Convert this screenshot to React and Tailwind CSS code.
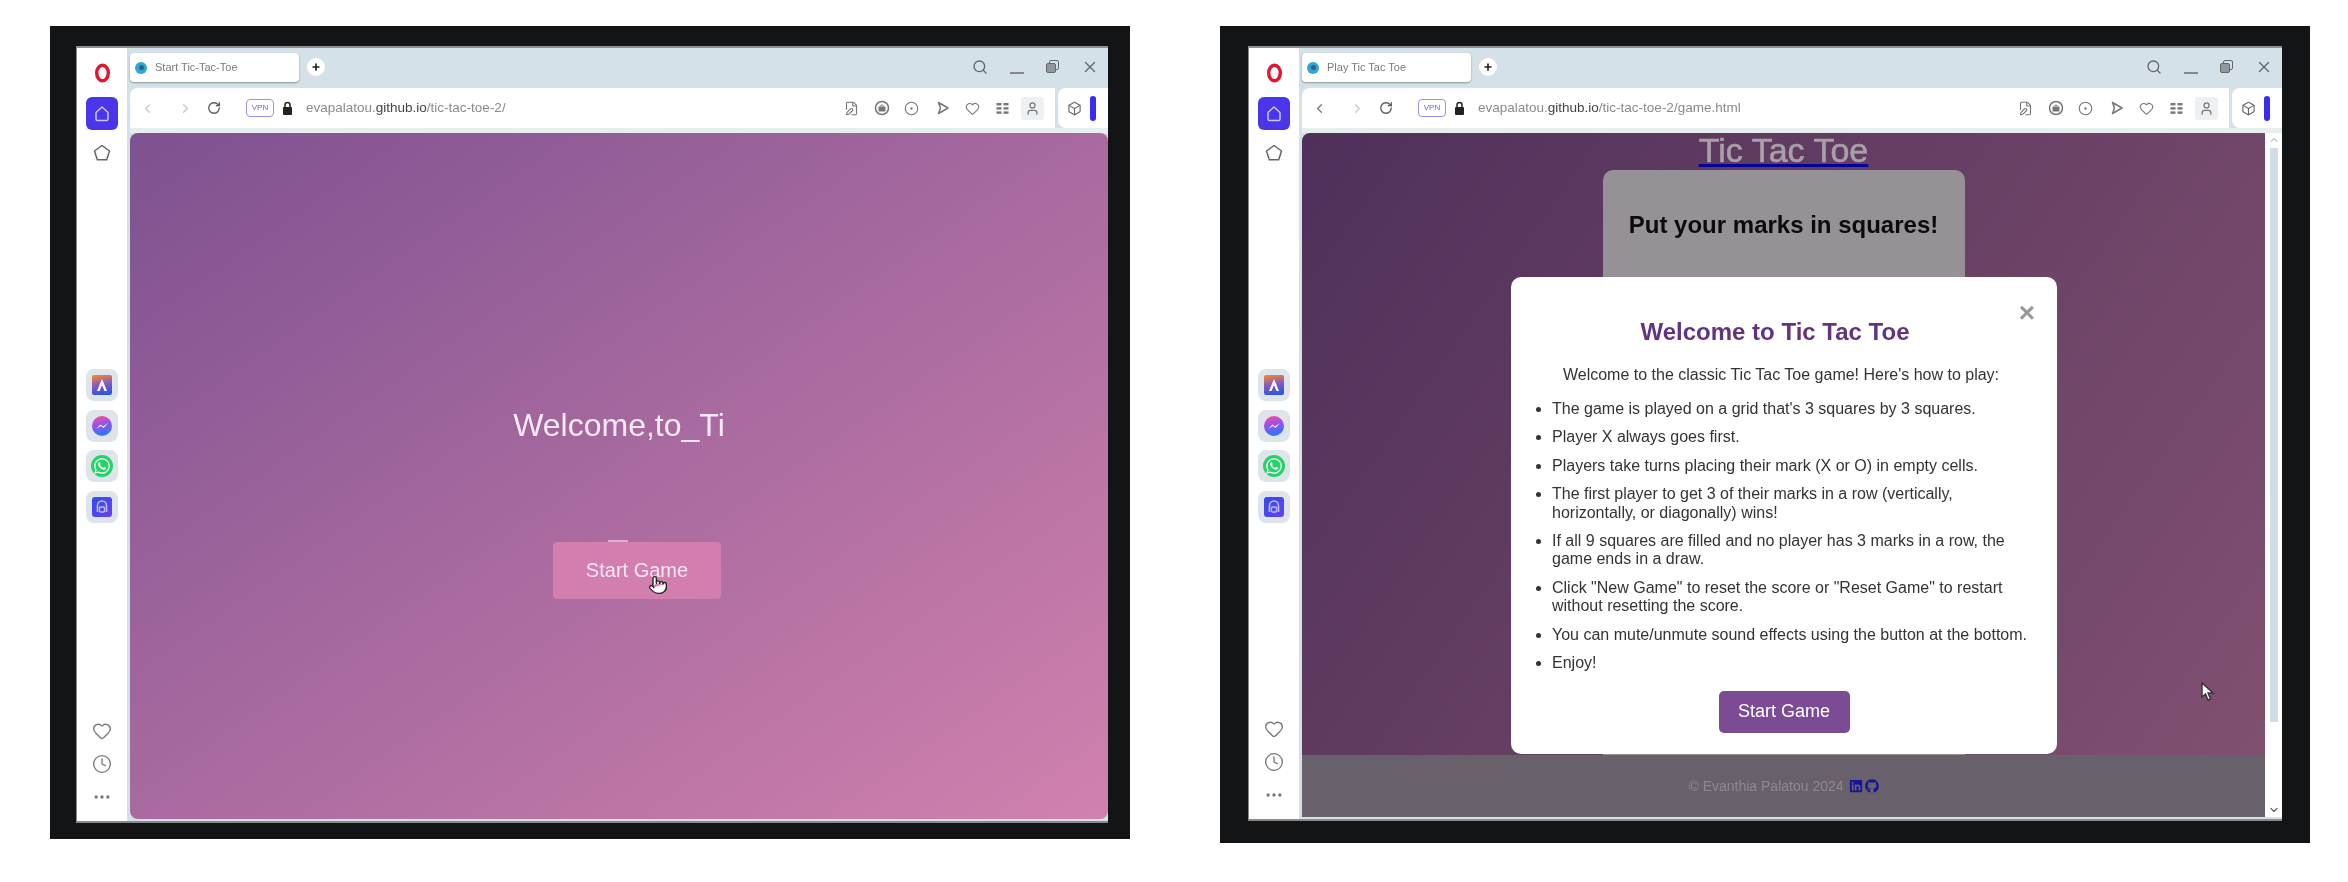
import React from 'react';
import {
  Search, X, ChevronLeft, ChevronRight, ChevronUp, ChevronDown, RotateCw, Heart, Clock,
  Ellipsis, Plus, Pointer, FilePen, CircleDot, User, Box,
} from 'lucide-react';
import { FaWhatsapp, FaLinkedin, FaGithub } from 'react-icons/fa';

const font = { fontFamily: '"Liberation Sans", Arial, sans-serif' };

const rules = [
  "The game is played on a grid that's 3 squares by 3 squares.",
  'Player X always goes first.',
  'Players take turns placing their mark (X or O) in empty cells.',
  'The first player to get 3 of their marks in a row (vertically, horizontally, or diagonally) wins!',
  'If all 9 squares are filled and no player has 3 marks in a row, the game ends in a draw.',
  'Click "New Game" to reset the score or "Reset Game" to restart without resetting the score.',
  'You can mute/unmute sound effects using the button at the bottom.',
  'Enjoy!',
];

const AppTile = ({ children }) => (
  <div className="w-8 h-8 rounded-lg bg-[#dde4ea] flex items-center justify-center">{children}</div>
);

const SnapIcon = () => (
  <svg width="16" height="16" viewBox="0 0 16 16" fill="none" stroke="currentColor" strokeWidth="1.5">
    <circle cx="8" cy="8" r="6.5" />
    <rect x="4.5" y="6.5" width="7" height="5" rx="1" fill="currentColor" stroke="none" />
    <path d="M6.5 6.5 L7.3 5 H8.7 L9.5 6.5" strokeWidth="1" />
  </svg>
);

const PlayerIcon = () => (
  <svg width="15" height="15" viewBox="0 0 15 15" fill="none" stroke="currentColor" strokeWidth="1.5" strokeLinejoin="round">
    <path d="M3.5 1.5 L13 7 L3.5 12.5 L5.5 7 Z" />
  </svg>
);

const ListsIcon = () => (
  <svg width="13" height="13" viewBox="0 0 13 13" fill="currentColor">
    <rect x="0.5" y="1" width="5" height="2.4" />
    <rect x="7.5" y="1" width="5" height="2.4" />
    <rect x="0.5" y="5.2" width="5" height="2.4" />
    <rect x="7.5" y="5.2" width="5" height="2.4" />
    <rect x="0.5" y="9.4" width="5" height="2.4" />
    <rect x="7.5" y="9.4" width="5" height="2.4" />
  </svg>
);

const LockIcon = () => (
  <svg className="ml-[8px]" width="11" height="15" viewBox="0 0 11 15">
    <path d="M3 6.5 V4 a2.5 2.5 0 0 1 5 0 V6.5" fill="none" stroke="#222" strokeWidth="1.5" />
    <rect x="1" y="6" width="9" height="8" rx="1" fill="#222" />
  </svg>
);

const Sidebar = () => (
  <div className="w-[50px] flex flex-col items-center pt-[15px] bg-white">
    <svg width="17" height="20" viewBox="0 0 17 20">
      <ellipse cx="8.5" cy="10" rx="5.8" ry="7.8" fill="none" stroke="#e0172d" strokeWidth="3.4" />
    </svg>
    <div className="mt-[14px] w-8 h-[33px] rounded-md bg-[#4a35ea] flex items-center justify-center">
      <svg width="18" height="18" viewBox="0 0 18 18" fill="none" stroke="#cfc8fb" strokeWidth="1.5">
        <path d="M9 2 L15 7.5 V14 Q15 15.5 13.5 15.5 H4.5 Q3 15.5 3 14 V7.5 Z" strokeLinejoin="round" />
      </svg>
    </div>
    <svg className="mt-[13px]" width="20" height="20" viewBox="0 0 20 20" fill="none" stroke="#666" strokeWidth="1.5">
      <path d="M10 2.5 L17.5 8 L14.7 16.8 H5.3 L2.5 8 Z" strokeLinejoin="round" />
    </svg>
    <div className="mt-[206px] flex flex-col gap-[8.7px]">
      <AppTile>
        <svg width="20" height="20" viewBox="0 0 20 20">
          <defs>
            <linearGradient id="aria" x1="0.4" y1="0" x2="0.6" y2="1">
              <stop offset="0" stopColor="#ee8238" />
              <stop offset="0.45" stopColor="#8a5ac0" />
              <stop offset="1" stopColor="#2a55e0" />
            </linearGradient>
          </defs>
          <rect width="20" height="20" rx="2" fill="url(#aria)" />
          <path d="M10 4 L15 16 H12.5 L10 10 L7.5 16 H5 Z" fill="#fff" />
        </svg>
      </AppTile>
      <AppTile>
        <svg width="22" height="22" viewBox="0 0 22 22">
          <defs>
            <linearGradient id="msg" x1="0.6" y1="1" x2="0.4" y2="0">
              <stop offset="0" stopColor="#1f7bff" />
              <stop offset="0.6" stopColor="#9a4ff0" />
              <stop offset="1" stopColor="#f04f9c" />
            </linearGradient>
          </defs>
          <circle cx="11" cy="11" r="10" fill="url(#msg)" />
          <path d="M5 14 L9.5 9.5 L12 11.5 L17 8 L12.5 13 L10 11 Z" fill="#fff" />
        </svg>
      </AppTile>
      <AppTile>
        <div className="w-[22px] h-[22px] rounded-full bg-[#25d366] flex items-center justify-center">
          <FaWhatsapp className="text-white w-[18px] h-[18px]" />
        </div>
      </AppTile>
      <AppTile>
        <svg width="20" height="20" viewBox="0 0 20 20">
          <defs>
            <linearGradient id="music" x1="0" y1="0" x2="1" y2="1">
              <stop offset="0" stopColor="#2f4cf0" />
              <stop offset="1" stopColor="#6a3ff0" />
            </linearGradient>
          </defs>
          <rect width="20" height="20" rx="3" fill="url(#music)" />
          <path d="M5.5 15 V8.5 a4.5 4.5 0 0 1 9 0 V15" fill="none" stroke="#b9c2f7" strokeWidth="1.6" />
          <rect x="7.5" y="10" width="5" height="5" rx="1" fill="none" stroke="#b9c2f7" strokeWidth="1.3" />
        </svg>
      </AppTile>
    </div>
    <div className="mt-auto pb-[8px] flex flex-col items-center text-[#777]">
      <div className="h-[33px] flex items-center"><Heart size={20} strokeWidth={1.6} /></div>
      <div className="h-[33px] flex items-center"><Clock size={20} strokeWidth={1.6} /></div>
      <div className="h-[33px] flex items-center"><Ellipsis size={20} strokeWidth={2} /></div>
    </div>
  </div>
);

const TabBar = ({ title }) => (
  <div className="h-[40px] flex items-start pt-[5px] bg-[#d5e1e8]">
    <div className="w-[169px] h-[29px] bg-white rounded-[4px] shadow-[0_1px_2px_rgba(0,0,0,0.35)] flex items-center pl-[5px] gap-[8px]">
      <div className="w-[12px] h-[12px] rounded-full bg-[#2ea6dc] flex items-center justify-center">
        <div className="w-[5px] h-[5px] rounded-full bg-[#35607a]" />
      </div>
      <span className="text-[11px] text-[#7a7a7a]">{title}</span>
    </div>
    <div className="ml-[8px] mt-[5px] w-[18px] h-[18px] rounded-full bg-white flex items-center justify-center">
      <Plus size={10} strokeWidth={4} className="text-[#222]" />
    </div>
    <div className="ml-auto pr-[9px] flex items-center text-[#666] h-[29px] mt-[-1px]">
      <Search size={16} strokeWidth={2} className="mr-[22px]" />
      <div className="w-[14px] h-[2px] bg-[#888] mt-[12px] mr-[22px]" />
      <div className="relative w-[13px] h-[13px] mr-[22px]">
        <div className="absolute right-0 top-0 w-[10px] h-[10px] border-[1.5px] border-[#666] rounded-[2px]" />
        <div className="absolute left-0 bottom-0 w-[10px] h-[10px] border-[1.5px] border-[#666] rounded-[2px] bg-[#8f989d]" />
      </div>
      <X size={18} strokeWidth={1.8} />
    </div>
  </div>
);

const AddressBar = ({ path, backActive }) => (
  <div className="h-[40px] flex bg-[#d5e1e8]">
    <div className="flex-1 bg-white rounded-tl-lg flex items-center pl-[10px] pr-[11px]">
      <ChevronLeft size={15} strokeWidth={2} className={backActive ? 'text-[#777]' : 'text-[#c8c8c8]'} />
      <ChevronRight size={15} strokeWidth={2} className="ml-[23px] text-[#c8c8c8]" />
      <RotateCw size={14} strokeWidth={2.2} className="ml-[14px] text-[#555]" />
      <div className="ml-[25px] w-[28px] h-[18px] rounded-[4px] border-[1.5px] border-[#9c92ea] flex items-center justify-center text-[8px] text-[#6f66c8]">VPN</div>
      <LockIcon />
      <span className="ml-[13px] text-[13.5px] text-[#8a8a8a]">
        evapalatou.<span className="text-[#444]">github.io</span>{path}
      </span>
      <div className="ml-auto flex items-center text-[#777]">
        <div className="w-[30.3px] flex justify-center"><FilePen size={15} strokeWidth={1.8} /></div>
        <div className="w-[30.3px] flex justify-center"><SnapIcon /></div>
        <div className="w-[30.3px] flex justify-center"><CircleDot size={15} strokeWidth={1.8} /></div>
        <div className="w-[30.3px] flex justify-center"><PlayerIcon /></div>
        <div className="w-[30.3px] flex justify-center"><Heart size={15} strokeWidth={1.8} /></div>
        <div className="w-[30.3px] flex justify-center"><ListsIcon /></div>
        <div className="w-[23px] h-[23px] ml-[3px] rounded-[3px] bg-[#eef1f3] flex items-center justify-center">
          <User size={15} strokeWidth={2} />
        </div>
      </div>
    </div>
    <div className="ml-[3px] w-[50px] bg-white rounded-l-lg flex items-center pl-[9px] text-[#666]">
      <Box size={15} strokeWidth={1.8} />
      <div className="ml-[8px] w-[6px] h-[25px] rounded-full bg-[#3a2bf0]" />
    </div>
  </div>
);

const Window = ({ title, path, backActive, children }) => (
  <div className="h-full flex bg-white border-l border-t-2 border-b-2 border-l-[#8a8a8a] border-t-[#8a8f92] border-b-[#8a8a8a] blur-[0.4px]">
    <Sidebar />
    <div className="w-[3px] bg-[#d5e1e8]" />
    <div className="flex-1 min-w-0 flex flex-col bg-[#d5e1e8]">
      <TabBar title={title} />
      <AddressBar path={path} backActive={backActive} />
      <div className="h-[5px] bg-[#e6efee]" />
      <div className="flex-1 min-h-0 flex">{children}</div>
    </div>
  </div>
);

const StartPage = () => (
  <div className="relative flex-1 mb-[2px] rounded-lg bg-gradient-to-br from-[#7e5190] via-[#a86a9f] to-[#d181ae] flex flex-col items-center pt-[274px]">
    <h1 className="text-[32px] text-[#f6e9f6] leading-[37px]">Welcome,to_Ti</h1>
    <div className="relative ml-[36px] mt-[98px]">
      <button className="w-[168px] h-[57px] pb-[2px] rounded-[4px] bg-[#d27fb0] text-[20px] text-[#f6e4f0]">Start Game</button>
      <div className="absolute -top-[2px] left-[55px] w-[20px] h-[2px] bg-[#d9b3d0]" />
      <Pointer size={20} strokeWidth={1.6} fill="#fff" className="absolute left-[95px] top-[33px] text-[#222]" />
    </div>
  </div>
);

const GamePage = () => (
  <>
    <div className="relative flex-1 min-w-0 mb-[2px] flex flex-col">
      <div className="flex-1 min-h-0 rounded-tl-lg flex flex-col items-center bg-[linear-gradient(125deg,#4f305a,#805070)]">
        <a className="h-[37px] text-[34px] leading-[35px] text-[#a8a0a8] [-webkit-text-stroke:0.6px_#a8a0a8] underline decoration-[#00009a] decoration-[3px] underline-offset-[2px]">Tic Tac Toe</a>
        <div className="w-[362px] flex-1 rounded-t-[10px] bg-[#969196] pt-[41px] text-center">
          <h2 className="text-[24px] leading-[28px] font-bold text-[#0b0b0b]">Put your marks in squares!</h2>
        </div>
      </div>
      <div className="h-[62px] bg-[#68616b] flex items-center justify-center text-[14px] text-[#8f8891]">
        <span>© Evanthia Palatou 2024</span>
        <FaLinkedin className="ml-[5px] w-[14px] h-[14px] text-[#14149a]" />
        <FaGithub className="ml-[2px] w-[14px] h-[14px] text-[#14149a]" />
      </div>
      <div className="absolute left-[209px] top-[144px] w-[546px] h-[477px] rounded-[10px] bg-white pt-[41px] text-center">
        <span className="absolute right-[22px] top-[21px] text-[28px] leading-[30px] font-bold text-[#999]">×</span>
        <h2 className="pr-[18px] text-[24px] leading-[28px] font-bold text-[#63337f]">Welcome to Tic Tac Toe</h2>
        <p className="mt-[20px] pr-[6px] text-[16px] leading-[18px] text-[#333]">Welcome to the classic Tic Tac Toe game! Here's how to play:</p>
        <ul className="mt-[16px] pl-[41px] pr-[20px] list-disc text-left text-[16px] leading-[18.4px] text-[#333]">
          {rules.map((text, i) => (
            <li key={i} className="mb-[10px]">{text}</li>
          ))}
        </ul>
        <button className="mt-[9px] w-[131px] h-[42px] pb-[2px] rounded-[5px] bg-[#7b4b93] text-[18px] text-white">Start Game</button>
      </div>
      <svg className="absolute left-[899px] top-[549px]" width="14" height="20" viewBox="0 0 14 20">
        <path d="M1 1 L1 15 L4.5 12 L7 18 L9.5 17 L7 11 L12 11 Z" fill="#fff" stroke="#333" strokeWidth="1.4" />
      </svg>
    </div>
    <div className="w-[17px] mb-[2px] bg-white flex flex-col items-center">
      <ChevronUp size={12} strokeWidth={2} className="mt-[1px] text-[#999]" />
      <div className="mt-[2px] w-[8px] h-[574px] bg-[#d0dde6]" />
      <ChevronDown size={12} strokeWidth={2.5} className="mt-auto mb-[1px] text-[#666]" />
    </div>
  </>
);

export default function App() {
  return (
    <div style={font} className="h-[882px] overflow-hidden bg-white flex items-start pl-[50px] pt-[26px] gap-[90px]">
      <div className="w-[1080px] h-[813px] bg-[#131416] pl-[26px] pr-[22px] pt-[20px] pb-[16px]">
        <Window title="Start Tic-Tac-Toe" path="/tic-tac-toe-2/">
          <StartPage />
        </Window>
      </div>
      <div className="w-[1090px] h-[817px] bg-[#131416] pl-[28px] pr-[28px] pt-[20px] pb-[22px]">
        <Window title="Play Tic Tac Toe" path="/tic-tac-toe-2/game.html" backActive>
          <GamePage />
        </Window>
      </div>
    </div>
  );
}
